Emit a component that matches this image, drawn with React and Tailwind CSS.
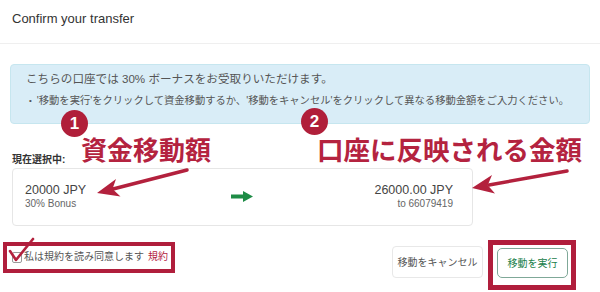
const RED = "#b3213d";

function Annotations() {
  return (
    <>
      {/* numbered badges */}
      <div className="absolute left-[61px] top-[110px] flex h-[27px] w-[27px] items-center justify-center rounded-full bg-[#b01f3a] text-[17px] font-bold leading-none text-white font-['Liberation_Sans',sans-serif]">
        1
      </div>
      <div className="absolute left-[301px] top-[108px] flex h-[27px] w-[27px] items-center justify-center rounded-full bg-[#b01f3a] text-[17px] font-bold leading-none text-white font-['Liberation_Sans',sans-serif]">
        2
      </div>

      {/* callout labels */}
      <div className="absolute left-[81px] top-[134px] text-[26px] font-bold leading-[30px] text-[#b4233f] font-['Noto_Sans_CJK_JP',sans-serif]">
        資金移動額
      </div>
      <div className="absolute left-[317px] top-[134px] text-[26.5px] font-bold leading-[30px] text-[#b4233f] font-['Noto_Sans_CJK_JP',sans-serif]">
        口座に反映される金額
      </div>

      {/* pointer arrows */}
      <svg className="pointer-events-none absolute inset-0" width="600" height="292" viewBox="0 0 600 292">
        <line x1="187" y1="170" x2="113" y2="189" stroke={RED} strokeWidth="3.5" strokeLinecap="round" />
        <polygon points="97,193 116,179 112.5,189 120.5,196.5" fill={RED} />
        <line x1="567" y1="171" x2="489" y2="185" stroke={RED} strokeWidth="3.5" strokeLinecap="round" />
        <polygon points="472,188 492,175 487.7,185.2 495,193.5" fill={RED} />
        {/* check mark */}
        <polyline points="10,251 16,260 33,239" fill="none" stroke={RED} strokeWidth="2.6" strokeLinecap="round" strokeLinejoin="round" />
      </svg>

      {/* highlight frames */}
      <div className="absolute left-[3px] top-[242px] h-[31px] w-[172px] border-[4px] border-[#b01e3c]" />
      <div className="absolute left-[488px] top-[240px] h-[50px] w-[88px] border-[5px] border-[#b01e3c]" />
    </>
  );
}

export default function App() {
  return (
    <div className="relative h-[292px] w-[600px] overflow-hidden bg-white text-[#333] font-['Liberation_Sans','Noto_Sans_CJK_JP',sans-serif]">
      <div className="h-[44px] border-b border-[#efefef] px-[12px] pt-[11px]">
        <div className="text-[13px] leading-[16px] text-[#333]">Confirm your transfer</div>
      </div>

      <div className="px-[10px] pt-[20px]">
        <div className="h-[60px] rounded-[4px] border border-[#c6e6ef] bg-[#d9edf7] pl-[15px] pt-[7px] text-[#555]">
          <div className="text-[11.6px] leading-[14px]">こちらの口座では 30% ボーナスをお受取りいただけます。</div>
          <div className="mt-[9px] flex items-center text-[10.3px] leading-[12px]">
            <span className="ml-[3px] mr-[5px] text-[8px]">•</span>
            <span>'移動を実行'をクリックして資金移動するか、'移動をキャンセル'をクリックして異なる移動金額をご入力ください。</span>
          </div>
        </div>

        <div className="ml-[2px] mt-[31px] text-[10px] font-bold leading-[10px] text-[#333]">現在選択中:</div>

        <div className="ml-[2px] mt-[3px] grid h-[58px] w-[461px] grid-cols-[1fr_auto_1fr] items-start rounded-[4px] border border-[#e6e6e6] pl-[12px] pr-[19px] pt-[14px]">
          <div>
            <div className="text-[12.5px] leading-[15px] text-[#444]">20000 JPY</div>
            <div className="text-[10px] leading-[12px] text-[#666]">30% Bonus</div>
          </div>
          <svg className="ml-[5px] mt-[8px]" width="22" height="11" viewBox="0 0 22 11">
            <rect x="0" y="3.5" width="14" height="4" fill="#1e8c46" />
            <polygon points="12,0 22,5.5 12,11" fill="#1e8c46" />
          </svg>
          <div className="text-right">
            <div className="text-[12.5px] leading-[15px] text-[#444]">26000.00 JPY</div>
            <div className="text-[10px] leading-[12px] text-[#666]">to 66079419</div>
          </div>
        </div>

        <div className="mt-[20px] flex items-start justify-between">
          <div className="ml-[2px] mt-[4px] flex items-center text-[10px] leading-[14px] text-[#555]">
            <span className="mr-[2px] inline-block h-[11px] w-[10px] rounded-[2px] border border-[#999] bg-white" />
            <span>私は規約を読み同意します</span>
            <span className="ml-[4px] text-[#b4233f]">規約</span>
          </div>
          <div className="mr-[22px] flex items-start gap-[14px]">
            <button className="h-[32px] w-[91px] rounded-[4px] border border-[#e8e8e8] bg-white text-[10px] text-[#555]">
              移動をキャンセル
            </button>
            <button className="mt-[2px] h-[30px] w-[71px] rounded-[5px] border border-[#7fa898] bg-white text-[10px] text-[#19804a]">
              移動を実行
            </button>
          </div>
        </div>
      </div>

      <Annotations />
    </div>
  );
}
